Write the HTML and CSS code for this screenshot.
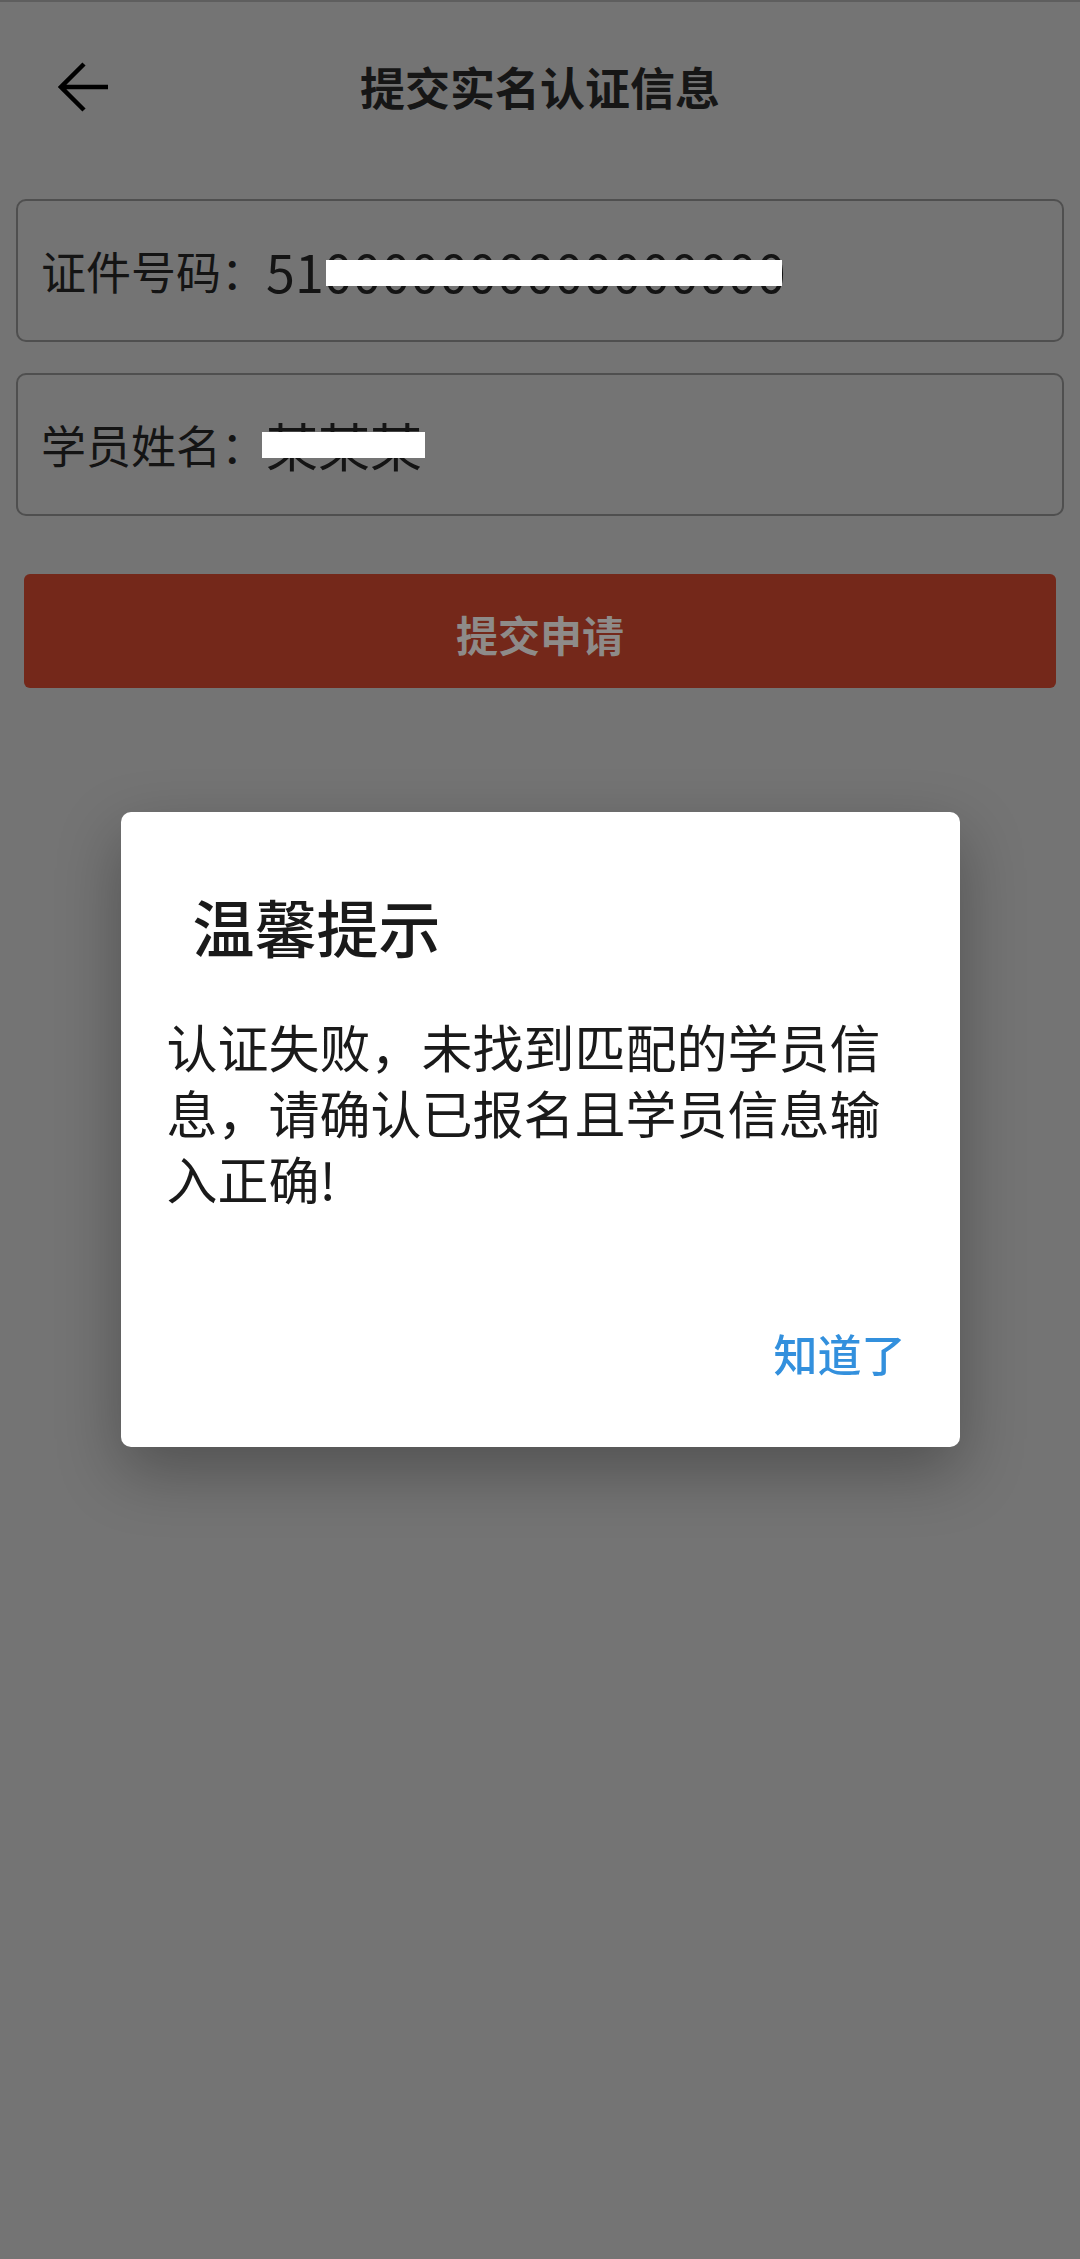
FILE: index.html
```html
<!DOCTYPE html>
<html lang="zh-CN">
<head>
    <meta charset="UTF-8">
    <meta name="viewport" content="width=device-width, initial-scale=1.0">
    <title>提交实名认证信息</title>
    <link rel="stylesheet" href="styles.css">
</head>
<body>
    <div class="page">
        <header class="topbar">
            <a class="back" href="#">
                <svg width="50" height="50" viewBox="0 0 50 50">
                    <path d="M26 2 L3 25 L26 48 M3 25 H50" fill="none" stroke="#000" stroke-width="4.5"/>
                </svg>
            </a>
            <h1>提交实名认证信息</h1>
        </header>

        <form class="auth-form">
            <div class="field">
                <span class="label">证件号码：</span>
                <span class="value">510000000000000000<i class="cover cover-id"></i></span>
            </div>
            <div class="field">
                <span class="label">学员姓名：</span>
                <span class="value">某某某<i class="cover cover-name"></i></span>
            </div>
            <button type="button" class="submit">提交申请</button>
        </form>
    </div>

    <div class="mask">
        <div class="dialog">
            <h2>温馨提示</h2>
            <p>认证失败，未找到匹配的学员信息，请确认已报名且学员信息输入正确!</p>
            <div class="dialog-footer">
                <button type="button" class="ok">知道了</button>
            </div>
        </div>
    </div>
</body>
</html>
```

FILE: styles.css
```css
body {
    margin: 0;
    height: 2259px;
    font-family: "Noto Sans CJK SC", "Noto Sans", sans-serif;
    background-color: #747474;
    color: #111;
}
.topbar {
    display: grid;
    grid-template-columns: 1fr auto 1fr;
    align-items: center;
    height: 172px;
    box-sizing: border-box;
    border-top: 2px solid #5e5e5e;
}
.back {
    display: flex;
    padding-left: 58px;
}
.topbar h1 {
    margin: 0;
    font-size: 45px;
    font-weight: bold;
    line-height: 60px;
    color: #161616;
}
.auth-form {
    display: flex;
    flex-direction: column;
    padding: 27px 16px 0;
}
.field {
    display: flex;
    align-items: center;
    height: 143px;
    box-sizing: border-box;
    padding-left: 23px;
    border: 2px solid #4f4f4f;
    border-radius: 10px;
    margin-bottom: 31px;
}
.field .label {
    font-size: 45px;
    line-height: 60px;
    color: #141414;
}
.field .value {
    position: relative;
    font-size: 52px;
    line-height: 72px;
    color: #141414;
}
/* 打码 */
.cover {
    position: absolute;
    background-color: #fff;
    height: 26px;
}
.cover-id {
    left: 60px;
    top: 25px;
    width: 456px;
}
.cover-name {
    left: -4px;
    top: 23px;
    width: 163px;
}
.submit {
    margin: 27px 8px 0;
    height: 114px;
    border: none;
    border-radius: 6px;
    background-color: #74281a;
    color: #8e8b89;
    font-family: inherit;
    font-size: 42px;
    font-weight: bold;
    padding-top: 6px;
}
.mask {
    position: fixed;
    top: 0;
    left: 0;
    right: 0;
    bottom: 0;
    display: flex;
    justify-content: center;
    align-items: center;
}
.dialog {
    width: 839px;
    box-sizing: border-box;
    padding: 72px 46px 64px;
    background-color: #fff;
    border-radius: 10px;
    box-shadow: 0 24px 64px rgba(0,0,0,0.3);
}
.dialog h2 {
    margin: 0;
    padding-left: 26px;
    font-size: 62px;
    font-weight: 500;
    line-height: 84px;
    color: #1a1a1a;
}
.dialog p {
    margin: 45px 0 0;
    font-size: 51px;
    line-height: 66px;
    color: #1a1a1a;
}
.dialog-footer {
    display: flex;
    justify-content: flex-end;
    margin-top: 112px;
    padding-right: 8px;
}
.ok {
    padding: 0;
    border: none;
    background: none;
    font-family: inherit;
    font-size: 44px;
    font-weight: 500;
    line-height: 60px;
    color: #3390dd;
}
```
